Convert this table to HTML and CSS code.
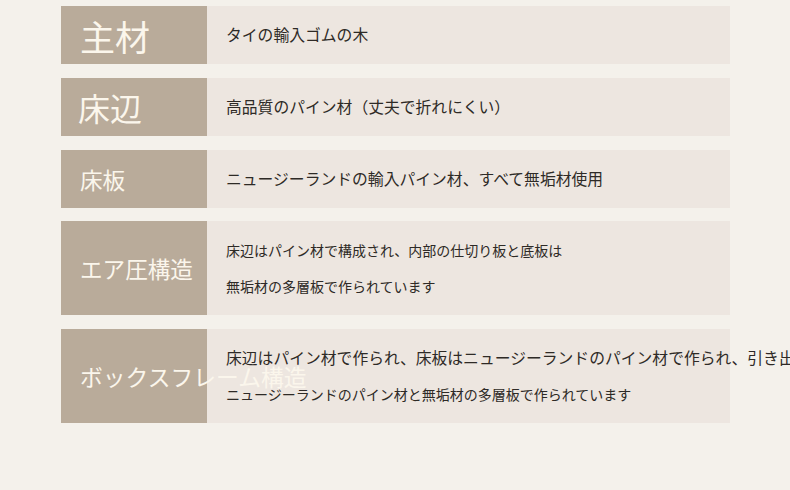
FILE: index.html
```html
<!DOCTYPE html>
<html lang="ja">
<head>
    <meta charset="UTF-8">
    <meta name="viewport" content="width=device-width, initial-scale=1.0">
    <title>仕様</title>
    <link rel="stylesheet" href="styles.css">
</head>
<body>
    <div class="spec-table">
        <div class="spec-row">
            <div class="spec-label label-xl">主材</div>
            <div class="spec-body">
                <p class="line">タイの輸入ゴムの木</p>
            </div>
        </div>

        <div class="spec-row">
            <div class="spec-label label-lg">床辺</div>
            <div class="spec-body">
                <p class="line">高品質のパイン材（丈夫で折れにくい）</p>
            </div>
        </div>

        <div class="spec-row">
            <div class="spec-label">床板</div>
            <div class="spec-body">
                <p class="line">ニュージーランドの輸入パイン材、すべて無垢材使用</p>
            </div>
        </div>

        <div class="spec-row tall">
            <div class="spec-label">エア圧構造</div>
            <div class="spec-body">
                <p class="line small">床辺はパイン材で構成され、内部の仕切り板と底板は</p>
                <p class="line small">無垢材の多層板で作られています</p>
            </div>
        </div>

        <div class="spec-row tall">
            <div class="spec-label label-wide">ボックスフレーム構造</div>
            <div class="spec-body">
                <p class="line">床辺はパイン材で作られ、床板はニュージーランドのパイン材で作られ、引き出しはパイン材です</p>
                <p class="line small">ニュージーランドのパイン材と無垢材の多層板で作られています</p>
            </div>
        </div>
    </div>
</body>
</html>
```

FILE: styles.css
```css
:root {
    --page-bg: #f4f1eb;
    --label-bg: #b9ab9a;
    --label-text: #fbf6ec;
    --body-bg: #ede6e0;
    --text-color: #2e2a26;
}

* {
    margin: 0;
    padding: 0;
    box-sizing: border-box;
}

html,
body {
    overflow: hidden;
}

body {
    background-color: var(--page-bg);
    color: var(--text-color);
    font-family: "Noto Sans CJK JP", "Noto Sans", sans-serif;
    height: 490px;
}

.spec-table {
    display: flex;
    flex-direction: column;
    gap: 14px;
    width: 730px;
    padding: 6px 0 0 61px;
}

.spec-row {
    display: flex;
    height: 58px;
}

.spec-row.tall {
    height: 94px;
}

.spec-table .spec-row:nth-child(4) {
    margin-top: -1px;
}

.spec-label {
    position: relative;
    z-index: 1;
    flex: 0 0 146px;
    min-width: 0;
    display: flex;
    align-items: center;
    padding-left: 19px;
    background-color: var(--label-bg);
    color: var(--label-text);
    font-size: 22.6px;
    white-space: nowrap;
}

.spec-label.label-xl {
    font-size: 35px;
}

.spec-label.label-lg {
    font-size: 32px;
    padding-left: 17px;
}

.spec-label.label-wide {
    font-size: 22.8px;
}

.spec-body {
    flex: 1;
    min-width: 0;
    display: flex;
    flex-direction: column;
    justify-content: center;
    padding-left: 19px;
    background-color: var(--body-bg);
    white-space: nowrap;
}

.line {
    font-size: 15.8px;
    line-height: 36px;
}

.line.small {
    font-size: 14px;
}
```
